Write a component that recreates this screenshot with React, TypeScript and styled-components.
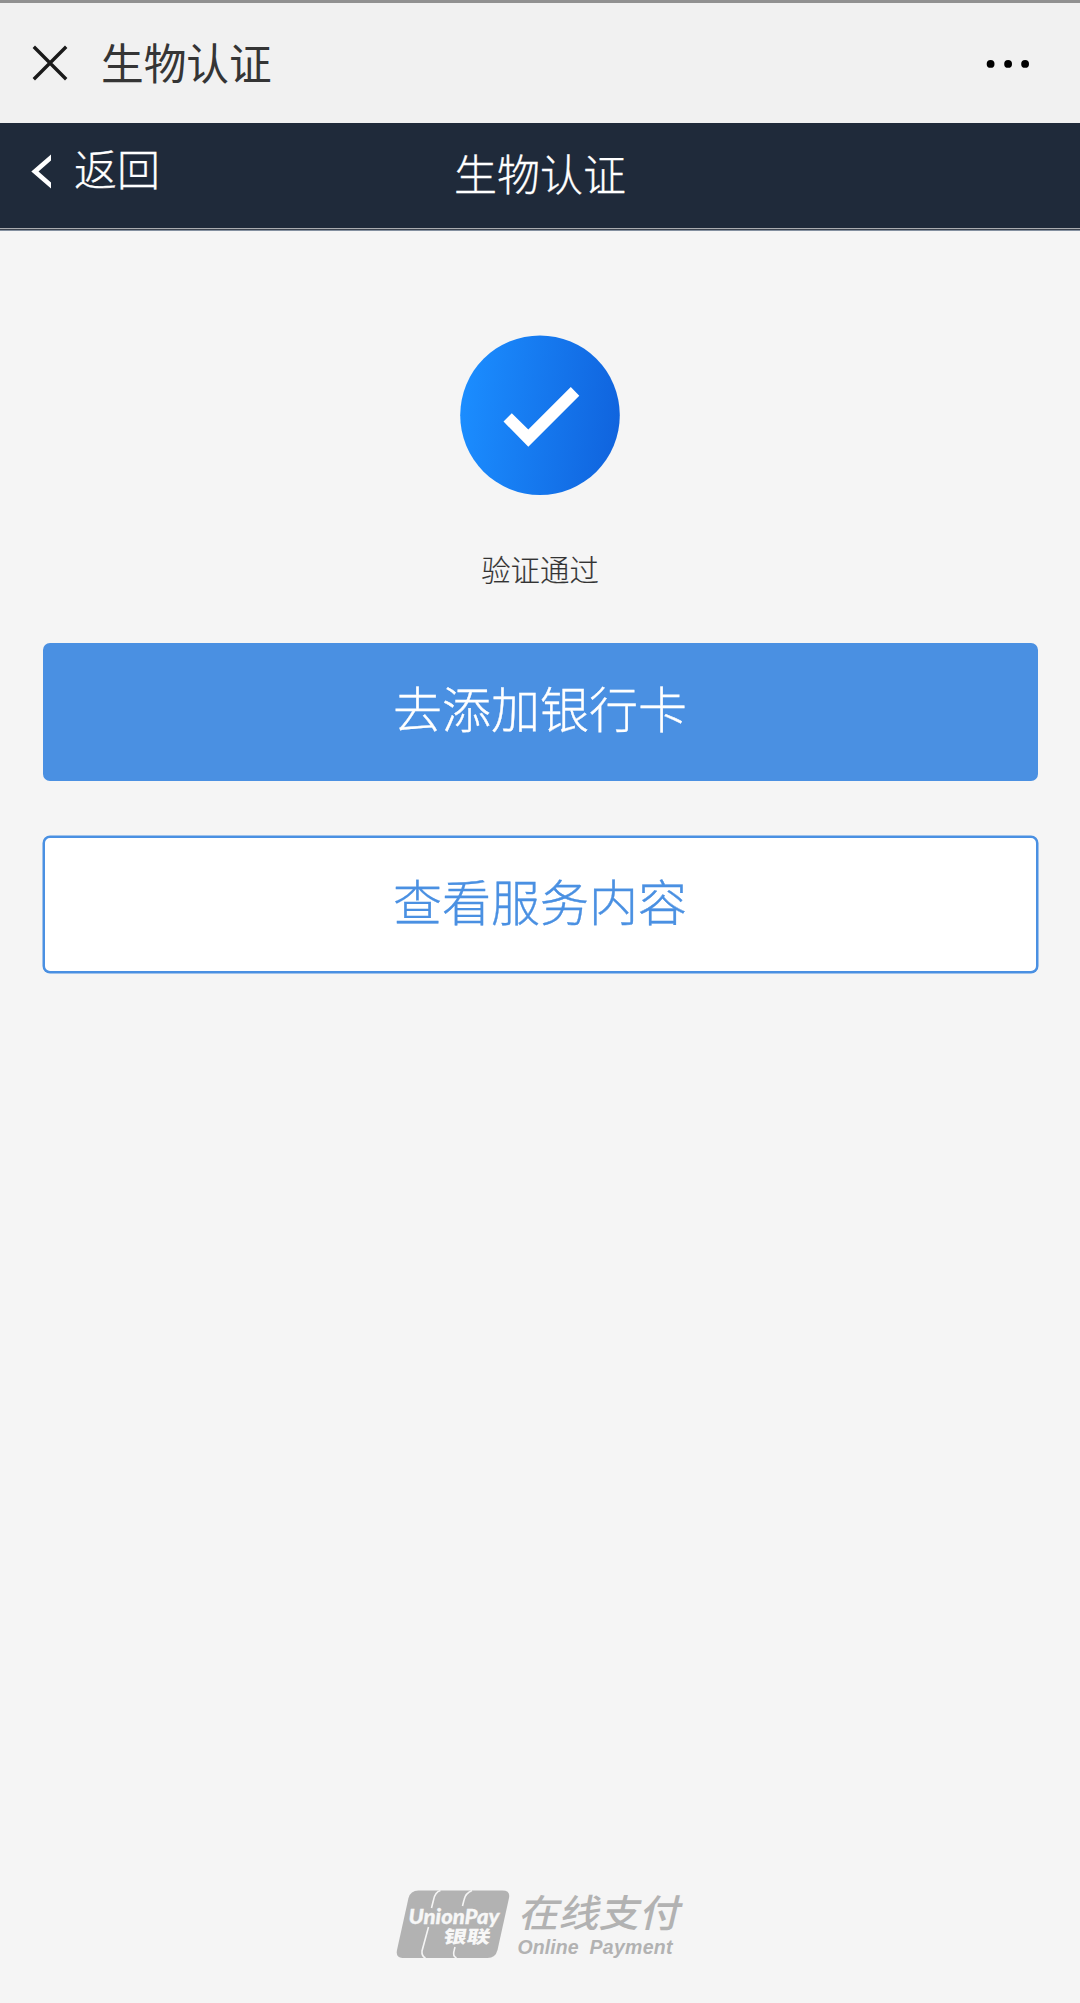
import React from "react";
import styled, { createGlobalStyle } from "styled-components";

const GlobalStyle = createGlobalStyle`
  *, *::before, *::after { box-sizing: border-box; }
  html, body { margin: 0; background: #f5f5f5; }
  body, button { font-family: "Noto Sans CJK SC", "Noto Sans", sans-serif; }
`;

const Page = styled.div`
  display: flex;
  flex-direction: column;
  height: 2003px;
  background: #f5f5f5;
`;

const TitleBar = styled.header`
  display: flex;
  align-items: center;
  height: 123px;
  padding: 0 51px 0 32px;
  border-top: 3px solid #919191;
  background: #f1f1f1;
`;

const IconButton = styled.button`
  display: flex;
  padding: 0;
  border: 0;
  background: none;
`;

const WindowTitle = styled.h1`
  flex: 1;
  margin: 0 0 4px 33px;
  color: #353535;
  font-size: 42.7px;
  font-weight: 400;
  line-height: 60px;
`;

const NavBar = styled.nav`
  display: grid;
  grid-template-columns: 1fr auto 1fr;
  align-items: center;
  height: 105px;
  padding: 0 31px;
  background: #1f2a3a;
  color: #fff;
  font-size: 43px;
  line-height: 60px;
  -webkit-text-stroke: 0.3px currentColor;
`;

const BackLink = styled.a`
  display: flex;
  align-items: center;
  gap: 22px;
  padding-bottom: 17px;
  font-weight: 300;
`;

const BackArrow = styled.svg`
  margin-top: 8px;
`;

const NavTitle = styled.h2`
  margin: 0;
  padding-bottom: 7px;
  font-size: 43px;
  font-weight: 300;
`;

const NavEdge = styled.div`
  height: 3px;
  border-top: 1px solid #aaacb0;
  border-bottom: 1px solid #8490a0;
  background: #3c434e;
`;

const Content = styled.main`
  display: flex;
  flex: 1;
  flex-direction: column;
  align-items: center;
  padding: 104px 42.5px 0;
`;

const Status = styled.p`
  margin: 50px 0 51px;
  color: #333;
  font-size: 29.4px;
  font-weight: 300;
  line-height: 47px;
  -webkit-text-stroke: 0.15px currentColor;
`;

const ActionButton = styled.button<{ $primary?: boolean }>`
  width: 100%;
  height: 137.5px;
  margin-bottom: 55px;
  padding: 0 0 ${(p) => (p.$primary ? 10 : 8)}px;
  border: 2px solid #4a90e2;
  border-radius: 7px;
  background: ${(p) => (p.$primary ? "#4a90e2" : "#fff")};
  box-shadow: ${(p) => (p.$primary ? "none" : "0 0 0 0.5px #4a90e2")};
  color: ${(p) => (p.$primary ? "#fff" : "#4a90e2")};
  font-size: 49px;
  font-weight: 300;
  line-height: 70px;
  -webkit-text-stroke: 0.35px currentColor;
`;

const Footer = styled.footer`
  display: flex;
  justify-content: center;
  height: 121px;
`;

function CloseIcon() {
  return (
    <svg width="36" height="36" viewBox="0 0 36 36" fill="none">
      <path d="M1.8 1.8 34.2 34.2M34.2 1.8 1.8 34.2" stroke="#1a1a1a" strokeWidth="3.4" />
    </svg>
  );
}

function MoreIcon() {
  return (
    <svg width="43" height="10" viewBox="0 0 43 10">
      <circle cx="4.6" cy="5.9" r="3.9" />
      <circle cx="22.1" cy="5.9" r="3.9" />
      <circle cx="39.1" cy="5.9" r="3.9" />
    </svg>
  );
}

function SuccessIcon() {
  return (
    <svg width="160" height="160" viewBox="0 0 160 160">
      <defs>
        <linearGradient id="success" x1="0" y1="0.45" x2="1" y2="0.55">
          <stop offset="0" stopColor="#1b8dff" />
          <stop offset="1" stopColor="#1064de" />
        </linearGradient>
      </defs>
      <circle cx="80" cy="80.2" r="79.8" fill="url(#success)" />
      <path d="M43.5 86.5 51.8 78.3 68.3 94.4 110.8 52 119.3 60.7 68.3 111.8Z" fill="#fff" />
    </svg>
  );
}

function PaymentLogo() {
  return (
    <svg width="300" height="84" viewBox="-5 -8 300 84">
      <g transform="translate(1.5 0)">
        <path
          d="M22 .5H106Q114 .5 112.5 8L101 60Q99 68 91 68H6Q-1 68 .5 60L12 8Q14 .5 22 .5Z"
          fill="#b2b2b2"
        />
        <g fill="none" stroke="#f5f5f5" strokeWidth="1.6">
          <path d="M44 .5Q38.5 2 37 10L35 18M32 37 25.5 61Q25 66 29 68" />
          <path d="M75.5 .5Q69 3 67.5 10L66 16M58.5 57 57.5 61Q56 66 60 68" />
        </g>
        <g fill="#f7f7f7">
          <text
            x="12" y="34" textLength="91" lengthAdjust="spacingAndGlyphs"
            fontFamily="Lato, sans-serif" fontSize="20.5" fontWeight="900" fontStyle="italic"
            stroke="#f7f7f7" strokeWidth="0.3"
          >UnionPay</text>
          <text
            x="0" y="0" transform="translate(46 52.7) skewX(-10)" textLength="47" lengthAdjust="spacingAndGlyphs"
            fontFamily="Noto Sans CJK SC, sans-serif" fontSize="17.5" fontWeight="900"
          >银联</text>
        </g>
      </g>
      <text
        transform="translate(123 36.5) skewX(-13)" textLength="161" lengthAdjust="spacingAndGlyphs"
        fontFamily="Noto Sans CJK SC, sans-serif" fontSize="38" fontWeight="500" fill="#b2b2b2"
      >在线支付</text>
      <g fill="#b2b2b2" fontFamily="Liberation Sans, sans-serif" fontSize="19.5" fontWeight="700" fontStyle="italic">
        <text x="122.5" y="64" textLength="61">Online</text>
        <text x="194.5" y="64" textLength="83">Payment</text>
      </g>
    </svg>
  );
}

export default function App() {
  return (
    <Page>
      <GlobalStyle />
      <TitleBar>
        <IconButton aria-label="关闭"><CloseIcon /></IconButton>
        <WindowTitle>生物认证</WindowTitle>
        <IconButton aria-label="更多"><MoreIcon /></IconButton>
      </TitleBar>
      <NavBar>
        <BackLink>
          <BackArrow width="21" height="35" viewBox="0 0 21 35">
            <path d="M20 .5V6.5L7.5 17.5 20 28.5V34.5L.3 17.5Z" fill="#fff" />
          </BackArrow>
          返回
        </BackLink>
        <NavTitle>生物认证</NavTitle>
      </NavBar>
      <NavEdge />
      <Content>
        <SuccessIcon />
        <Status>验证通过</Status>
        <ActionButton $primary>去添加银行卡</ActionButton>
        <ActionButton>查看服务内容</ActionButton>
      </Content>
      <Footer><PaymentLogo /></Footer>
    </Page>
  );
}
